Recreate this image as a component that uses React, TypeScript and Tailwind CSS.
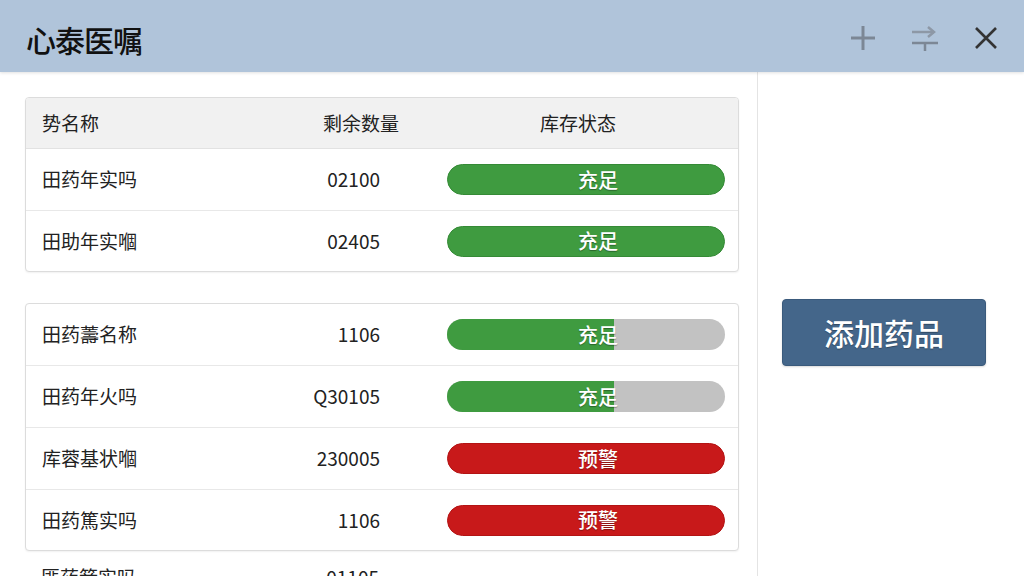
import React from 'react';

type Row = { name: string; qty: string; status: 'ok' | 'partial' | 'warn' };

const group1: Row[] = [
  { name: '田药年实吗', qty: '02100', status: 'ok' },
  { name: '田助年实嗰', qty: '02405', status: 'ok' },
];

const group2: Row[] = [
  { name: '田药薵名称', qty: '1106', status: 'partial' },
  { name: '田药年火吗', qty: 'Q30105', status: 'partial' },
  { name: '库蓉基状嗰', qty: '230005', status: 'warn' },
  { name: '田药篤实吗', qty: '1106', status: 'warn' },
];

const font = { fontFamily: '"Noto Sans CJK SC", "Noto Sans", sans-serif' };

const Pill = ({ status }: { status: Row['status'] }) => {
  if (status === 'warn') {
    return (
      <div className="relative w-[278px] h-[31px] rounded-full bg-[#c8191a] border border-[#b31414] flex items-center justify-center pl-[24px]">
        <span className="text-white text-[20px] font-medium leading-none [text-shadow:0_1px_1px_rgba(0,0,0,0.35)]">预警</span>
      </div>
    );
  }
  if (status === 'partial') {
    return (
      <div className="relative w-[278px] h-[31px] rounded-full bg-[#c2c2c2] overflow-hidden">
        <div className="absolute inset-y-0 left-0 w-[60%] bg-[#3f9b40]" />
        <span className="absolute inset-0 flex items-center justify-center pl-[24px] text-white text-[20px] font-medium leading-none [text-shadow:0_1px_1px_rgba(0,0,0,0.35)]">充足</span>
      </div>
    );
  }
  return (
    <div className="w-[278px] h-[31px] rounded-full bg-[#3f9b40] border border-[#358a36] flex items-center justify-center pl-[24px]">
      <span className="text-white text-[20px] font-medium leading-none [text-shadow:0_1px_1px_rgba(0,0,0,0.35)]">充足</span>
    </div>
  );
};

const TableRow = ({ row, last }: { row: Row; last?: boolean }) => (
  <div className={`flex items-center ${last ? 'h-[60px]' : 'h-[62px] border-b border-[#e8e8e8]'}`}>
    <div className="w-[260px] pl-4 text-[19px] text-[#222]">{row.name}</div>
    <div className="w-[94px] text-right text-[19px] text-[#222]">{row.qty}</div>
    <div className="ml-[67px]">
      <Pill status={row.status} />
    </div>
  </div>
);

const Card = ({ children }: { children: React.ReactNode }) => (
  <div className="shrink-0 border border-[#dcdcdc] rounded-[4px] bg-white shadow-[0_1px_2px_rgba(0,0,0,0.06)] overflow-hidden">
    {children}
  </div>
);

export default function App() {
  return (
    <div className="w-[1024px] h-[576px] overflow-hidden bg-white flex flex-col" style={font}>
      <header className="h-[72px] shrink-0 bg-[#b0c4da] flex items-center pl-[26px] pr-[26px] shadow-[0_1px_3px_rgba(0,0,0,0.12)] relative z-10">
        <h1 className="text-[30px] text-[#111] font-medium pt-[6px] tracking-[-1px]">心泰医嘱</h1>
        <div className="ml-auto flex items-center gap-[35px] pt-[4px]">
          <svg width="26" height="26" viewBox="0 0 26 26">
            <path d="M13 1v24M1 13h24" stroke="#7c8795" strokeWidth="3" />
          </svg>
          <svg width="28" height="28" viewBox="0 0 28 28">
            <path d="M1 8h22" stroke="#8d98a6" strokeWidth="2.5" />
            <path d="M17 3l6 5-6 5" stroke="#8d98a6" strokeWidth="2.5" fill="none" />
            <path d="M1 19h26M14 19v8" stroke="#7c8795" strokeWidth="2.5" />
          </svg>
          <svg width="24" height="24" viewBox="0 0 24 24">
            <path d="M2 2l20 20M22 2L2 22" stroke="#333" strokeWidth="2.6" />
          </svg>
        </div>
      </header>

      <div className="flex flex-1 min-h-0">
        <main className="w-[758px] shrink-0 border-r border-[#e4e4e4] pl-[25px] pr-[18px] pt-[25px] flex flex-col gap-[31px] overflow-hidden">
          <Card>
            <div className="flex items-center h-[51px] bg-[#f1f1f1] border-b border-[#e2e2e2] text-[19px] text-[#222]">
              <div className="w-[260px] pl-4">势名称</div>
              <div className="w-[113px] text-right">剩余数量</div>
              <div className="ml-[141px]">库存状态</div>
            </div>
            {group1.map((r, i) => (
              <TableRow key={i} row={r} last={i === group1.length - 1} />
            ))}
          </Card>
          <div className="shrink-0 flex flex-col gap-[2px]">
            <Card>
              {group2.map((r, i) => (
                <TableRow key={i} row={r} last={i === group2.length - 1} />
              ))}
            </Card>
            <div className="flex items-center pt-[10px] text-[19px] text-[#222]">
              <div className="w-[260px] pl-4">匪药箭实吗</div>
              <div className="w-[94px] text-right">01105</div>
            </div>
          </div>
        </main>

        <aside className="flex-1 pl-[24px] pt-[227px]">
          <button className="w-[204px] h-[67px] rounded-[4px] bg-[#44668a] border border-[#3a5a7c] text-white text-[30px] font-medium flex items-center justify-center shadow-[0_1px_2px_rgba(0,0,0,0.15)] [text-shadow:0_1px_1px_rgba(0,0,0,0.3)]">
            添加药品
          </button>
        </aside>
      </div>
    </div>
  );
}
